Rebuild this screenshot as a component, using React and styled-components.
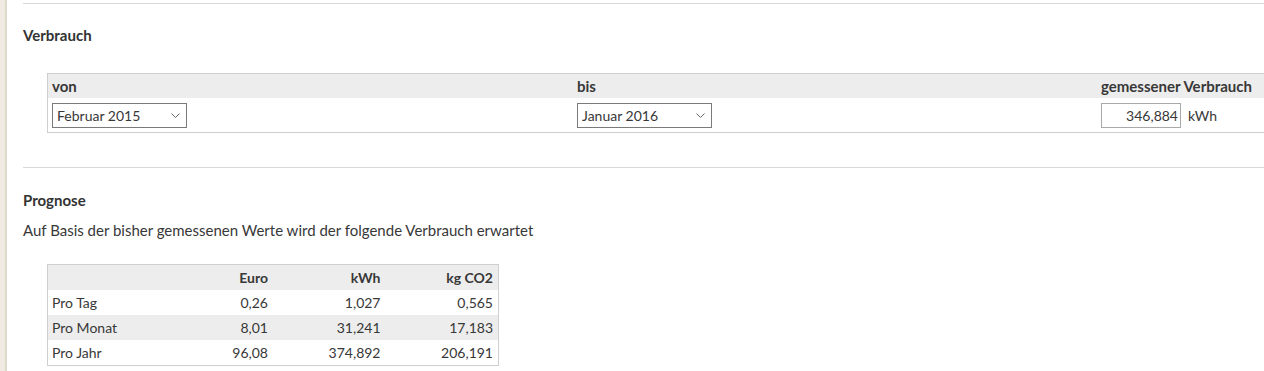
import React from "react";
import styled, { createGlobalStyle } from "styled-components";

const Global = createGlobalStyle`
  html, body { margin: 0; padding: 0; background: #fff; overflow: hidden; }
  body { font-family: Lato, "Open Sans", sans-serif; color: #383838; font-size: 15px; }
`;

const Page = styled.div`
  display: flex;
  min-height: 371px;
`;

const Strip = styled.div`
  width: 5px;
  flex: none;
  background: #efebe3;
  border-right: 2px solid #ddd8cc;
`;

const Main = styled.main`
  flex: 1;
  padding: 3px 0 0 16px;
  min-width: 0;
`;

const Rule = styled.hr`
  margin: ${(p) => p.$top || 0}px 0 0 0;
  border: none;
  border-top: 1px solid #d8d8d8;
`;

const Heading = styled.h2`
  margin: ${(p) => p.$top}px 0 0 0;
  font-size: 15px;
  line-height: 20px;
  font-weight: 700;
  color: #333;
`;

const Para = styled.p`
  margin: 10px 0 0 0;
  line-height: 20px;
`;

const RangeTable = styled.div`
  margin: 28px 0 0 24px;
  border: 1px solid #cfcfcf;
  border-right: none;
  display: grid;
  grid-template-columns: 525px 524px 1fr;
`;

const HeadCell = styled.div`
  background: #ededed;
  height: 24px;
  line-height: 24px;
  padding: 0 4px;
  font-weight: 700;
  white-space: nowrap;
`;

const BodyCell = styled.div`
  height: 34px;
  padding: 0 4px;
  display: flex;
  align-items: center;
  gap: 7px;
`;

const SelectWrap = styled.div`
  position: relative;
  width: 135px;
  height: 25px;
`;

const Select = styled.select`
  appearance: none;
  width: 100%;
  height: 100%;
  box-sizing: border-box;
  border: 1px solid #7a7a7a;
  border-radius: 0;
  background: #fff;
  font-family: inherit;
  font-size: 14px;
  color: #383838;
  padding: 0 20px 0 4px;
`;

const Chevron = styled.svg`
  position: absolute;
  right: 7px;
  top: 10px;
  pointer-events: none;
`;

const NumberInput = styled.input`
  width: 80px;
  height: 25px;
  box-sizing: border-box;
  border: 1px solid #a9a9a9;
  text-align: right;
  font-family: inherit;
  font-size: 14px;
  color: #383838;
  padding: 0 2px;
`;

const Unit = styled.span`
  font-size: 14px;
`;

const ForecastTable = styled.div`
  margin: 24px 0 0 24px;
  width: 450px;
  border: 1px solid #cfcfcf;
  display: grid;
  grid-template-columns: repeat(4, 1fr);
`;

const FCell = styled.div`
  height: 25px;
  line-height: 25px;
  padding: 0 5px 0 4px;
  font-size: 14px;
  text-align: ${(p) => (p.$num ? "right" : "left")};
  font-weight: ${(p) => (p.$head ? 700 : 400)};
  background: ${(p) => (p.$shade ? "#ededed" : "#fff")};
`;

function Dropdown({ value }) {
  return (
    <SelectWrap>
      <Select defaultValue={value}>
        <option>{value}</option>
      </Select>
      <Chevron width="9" height="5" viewBox="0 0 9 5">
        <path d="M0.5 0.5 L4.5 4.5 L8.5 0.5" fill="none" stroke="#666" strokeWidth="1" />
      </Chevron>
    </SelectWrap>
  );
}

const rows = [
  ["Pro Tag", "0,26", "1,027", "0,565"],
  ["Pro Monat", "8,01", "31,241", "17,183"],
  ["Pro Jahr", "96,08", "374,892", "206,191"],
];

export default function App() {
  return (
    <>
      <Global />
      <Page>
        <Strip />
        <Main>
          <Rule />
          <Heading $top={21}>Verbrauch</Heading>
          <RangeTable>
            <HeadCell>von</HeadCell>
            <HeadCell>bis</HeadCell>
            <HeadCell>gemessener Verbrauch</HeadCell>
            <BodyCell>
              <Dropdown value="Februar 2015" />
            </BodyCell>
            <BodyCell>
              <Dropdown value="Januar 2016" />
            </BodyCell>
            <BodyCell>
              <NumberInput defaultValue="346,884" />
              <Unit>kWh</Unit>
            </BodyCell>
          </RangeTable>
          <Rule $top={34} />
          <Heading $top={22}>Prognose</Heading>
          <Para>Auf Basis der bisher gemessenen Werte wird der folgende Verbrauch erwartet</Para>
          <ForecastTable>
            <FCell $head $shade />
            <FCell $head $shade $num>Euro</FCell>
            <FCell $head $shade $num>kWh</FCell>
            <FCell $head $shade $num>kg CO2</FCell>
            {rows.map((r, i) =>
              r.map((c, j) => (
                <FCell key={i + "-" + j} $num={j > 0} $shade={i === 1}>
                  {c}
                </FCell>
              ))
            )}
          </ForecastTable>
        </Main>
      </Page>
    </>
  );
}
